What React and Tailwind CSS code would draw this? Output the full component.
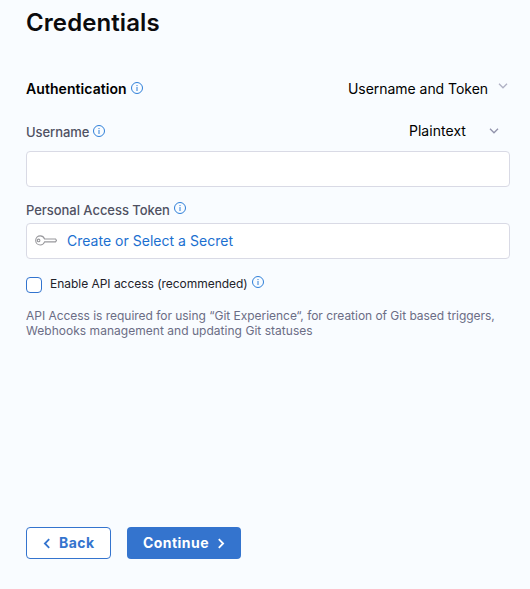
function InfoIcon({ className = '' }) {
  return (
    <svg className={`size-3 shrink-0 ${className}`} viewBox="0 0 12 12" fill="none" stroke="#2f7fd8">
      <circle cx="6" cy="6" r="5.5" strokeWidth="1" />
      <path d="M6 5V9" strokeWidth="1" />
      <path d="M6 3v1.1" strokeWidth="1" />
    </svg>
  );
}

function ChevronDown({ className = '' }) {
  return (
    <svg className={`shrink-0 ${className}`} viewBox="0 0 10 6" fill="none" stroke="currentColor" strokeWidth="1.3">
      <path d="M1 .8l4 4L9 .8" />
    </svg>
  );
}

function KeyIcon() {
  return (
    <svg className="mb-[2px] h-[11px] w-[22px] shrink-0" viewBox="0 0 22 11" fill="none" stroke="#98989c" strokeWidth="1.1">
      <path d="M9.6 4H20.6l.9 1.4-1 1.5H9.6C8.8 8.9 7.4 10 5.3 10 2.7 10 .7 8 .7 5.45S2.7.9 5.3.9c2.1 0 3.5 1.1 4.3 3.1z" />
      <circle cx="3.6" cy="5.45" r="1.3" />
    </svg>
  );
}

export default function App() {
  return (
    <main className="flex h-[589px] w-[530px] flex-col bg-[#f9fcff] pr-5 pl-[26px] font-['Inter',sans-serif] text-black">
      <h1 className="mt-[7px] h-8 text-2xl leading-8 font-semibold tracking-[0.09px] text-[#0b0b0d]">Credentials</h1>

      <div className="mt-[38px] flex h-6 items-center justify-between">
        <div className="flex items-center gap-1 text-sm font-semibold tracking-[0.07px]">
          Authentication
          <InfoIcon className="mb-[2px]" />
        </div>
        <div className="flex items-center gap-[10px] text-sm tracking-[-0.04px]">
          Username and Token
          <ChevronDown className="mr-[2px] mb-[6px] h-[6px] w-[10px] text-[#b0b1c4]" />
        </div>
      </div>

      <div className="mt-[18px] flex h-6 items-center justify-between">
        <label htmlFor="username" className="flex items-center gap-1 pt-[2px] text-[13px] font-medium tracking-[-0.06px] text-[#4f5162]">
          <span className="pt-[2px]">Username</span>
          <InfoIcon className="mb-[3px]" />
        </label>
        <div className="flex items-center text-sm tracking-[0.05px]">
          Plaintext
          <ChevronDown className="mr-[11px] ml-[23px] h-[6px] w-[10px] text-[#9293ab]" />
        </div>
      </div>
      <input id="username" className="mt-2 h-9 w-full shrink-0 rounded border border-[#d9dae5] bg-white px-2 text-sm outline-none" />

      <div className="mt-[13px] flex h-5 items-center gap-1 text-[13px] font-medium tracking-[-0.04px] text-[#4f5162]">
        <span className="pt-[2px]">Personal Access Token</span>
        <InfoIcon className="mb-[4px]" />
      </div>
      <button className="mt-[3px] flex h-9 w-full items-center gap-[10px] rounded border border-[#d9dae5] bg-white pl-2 text-sm tracking-[0.02px] text-[#1b6fd0]">
        <KeyIcon />
        Create or Select a Secret
      </button>

      <label className="mt-[15px] flex h-5 items-center text-xs tracking-[-0.03px] text-[#22222a]">
        <input type="checkbox" className="mt-[2px] mr-2 size-4 appearance-none rounded border border-[#3274cf] bg-white" />
        Enable API access (recommended)
        <InfoIcon className="mb-[4px] ml-1" />
      </label>

      <p className="mt-[14px] text-xs leading-[15px] text-[#6b6d85]">
        <span className="tracking-[-0.03px]">
          API Access is required for using “Git Experience“, for creation of Git based triggers,
        </span>{' '}
        <span className="tracking-[0.03px]">Webhooks management and updating Git statuses</span>
      </p>

      <div className="mt-auto mb-[30px] flex gap-4 text-sm font-bold tracking-[0.45px]">
        <button className="flex h-8 w-[85px] items-center rounded border border-[#3474ce] bg-white pl-4 text-[#3474ce]">
          <svg className="mr-2 h-[11px] w-2" viewBox="0 0 8 11" fill="none" stroke="currentColor" strokeWidth="1.8">
            <path d="M6.2 1.2L1.9 5.5l4.3 4.3" />
          </svg>
          Back
        </button>
        <button className="flex h-8 w-[114px] items-center rounded bg-[#3474ce] pl-4 text-white">
          Continue
          <svg className="ml-2 h-[11px] w-2" viewBox="0 0 8 11" fill="none" stroke="currentColor" strokeWidth="1.8">
            <path d="M1.8 1.2l4.3 4.3-4.3 4.3" />
          </svg>
        </button>
      </div>
    </main>
  );
}
